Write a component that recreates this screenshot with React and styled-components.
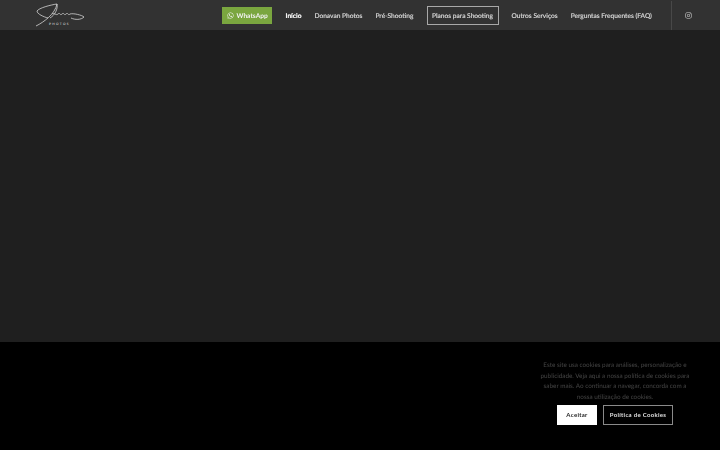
import styled, { createGlobalStyle } from "styled-components";
import { FaWhatsapp, FaInstagram } from "react-icons/fa";

const GlobalStyle = createGlobalStyle`
  html, body {
    margin: 0;
    padding: 0;
    height: 100%;
    overflow: hidden;
    background: #000;
    font-family: "Lato", "Liberation Sans", sans-serif;
    text-rendering: geometricPrecision;
  }
`;

const Page = styled.div`
  width: 720px;
  height: 450px;
  display: flex;
  flex-direction: column;
`;

const Header = styled.header`
  height: 30px;
  flex: none;
  display: flex;
  align-items: center;
  background: #323232;
`;

const Logo = styled.svg`
  width: 50px;
  height: 24px;
  margin-left: 35px;
  flex: none;
`;

const Nav = styled.nav`
  display: flex;
  align-items: center;
  margin-left: auto;
  height: 100%;
  padding-top: 1px;
  box-sizing: border-box;
  will-change: transform;
`;

const NavItem = styled.a`
  font-size: 6.6px;
  font-weight: ${(p) => (p.$active ? 700 : 500)};
  color: ${(p) => (p.$active ? "#fff" : "#d8d8d8")};
  margin-left: 13px;
  white-space: nowrap;
  -webkit-text-stroke: 0.15px currentColor;
`;

const WhatsApp = styled.a`
  display: flex;
  align-items: center;
  gap: 2.5px;
  height: 17px;
  width: 50px;
  margin-top: -1px;
  margin-right: 0.5px;
  box-sizing: border-box;
  padding: 1px 0 0 5px;
  background: #7aa63f;
  color: #f2f2f2;
  font-size: 6.6px;
  font-weight: 700;
  white-space: nowrap;
`;

const Outlined = styled.a`
  display: flex;
  align-items: center;
  justify-content: center;
  box-sizing: border-box;
  width: 72px;
  height: 19px;
  margin-left: 13px;
  margin-top: -1px;
  padding-top: 1px;
  border: 1px solid #a8a8a8;
  color: #d8d8d8;
  font-size: 6.6px;
  font-weight: 500;
  white-space: nowrap;
  -webkit-text-stroke: 0.15px currentColor;
`;

const Social = styled.div`
  display: flex;
  align-items: center;
  box-sizing: border-box;
  width: 49px;
  height: 100%;
  margin-left: 19px;
  margin-top: -1px;
  padding-left: 13px;
  border-left: 1px solid #484848;
  color: #d8d8d8;
  font-size: 7px;
`;

const Main = styled.main`
  flex: 1;
  background: #1f1f1f;
`;

const CookieBar = styled.section`
  height: 108px;
  flex: none;
  background: #000;
  display: flex;
  justify-content: flex-end;
  will-change: transform;
`;

const CookieBox = styled.div`
  width: 160px;
  margin-right: 25px;
  padding-top: 19px;
  display: flex;
  flex-direction: column;
  align-items: center;
`;

const CookieText = styled.p`
  margin: 0;
  font-size: 6.35px;
  line-height: 10.67px;
  text-align: center;
  color: #444;
`;

const Buttons = styled.div`
  display: flex;
  gap: 6px;
  margin-top: 1px;
`;

const CookieButton = styled.button`
  box-sizing: border-box;
  height: 20px;
  width: ${(p) => p.$width}px;
  padding: 0;
  border: 1px solid ${(p) => (p.$filled ? "#fff" : "#8a8a8a")};
  background: ${(p) => (p.$filled ? "#fff" : "#000")};
  color: ${(p) => (p.$filled ? "#222" : "#e0e0e0")};
  font-family: inherit;
  font-size: 6px;
  font-weight: 700;
  letter-spacing: 0.3px;
`;

export default function App() {
  return (
    <Page>
      <GlobalStyle />
      <Header>
        <Logo viewBox="0 0 50 24" fill="none" stroke="#d4d4d4" strokeWidth="0.8">
          <path d="M1 23 C9 19 20 11 22 1 C15 2 4 5 2 8 C2 11 9 14 13 15" />
          <path d="M22 1 C23 6 20 12 15 15" />
          <path d="M17 11 C19 9 21 13 23 11 C25 9 25 13 27 11 C29 9 29 13 31 11 C33 9 33 13 35 11 C38 10 47 12 49 14 C46 17 40 17 36 15" />
          <text x="14" y="22" fontSize="3.2" letterSpacing="1.3" fontWeight="700" fill="#c4c4c4" stroke="none" fontFamily="Lato">PHOTOS</text>
        </Logo>
        <Nav>
          <WhatsApp>
            <FaWhatsapp size={7} />
            WhatsApp
          </WhatsApp>
          <NavItem $active>Início</NavItem>
          <NavItem>Donavan Photos</NavItem>
          <NavItem>Pré-Shooting</NavItem>
          <Outlined>Planos para Shooting</Outlined>
          <NavItem>Outros Serviços</NavItem>
          <NavItem>Perguntas Frequentes (FAQ)</NavItem>
          <Social>
            <FaInstagram />
          </Social>
        </Nav>
      </Header>
      <Main />
      <CookieBar>
        <CookieBox>
          <CookieText>
            Este site usa cookies para análises, personalização e publicidade. Veja aqui a nossa política de cookies para saber mais. Ao continuar a navegar, concorda com a nossa utilização de cookies.
          </CookieText>
          <Buttons>
            <CookieButton $filled $width={40}>Aceitar</CookieButton>
            <CookieButton $width={70}>Política de Cookies</CookieButton>
          </Buttons>
        </CookieBox>
      </CookieBar>
    </Page>
  );
}
